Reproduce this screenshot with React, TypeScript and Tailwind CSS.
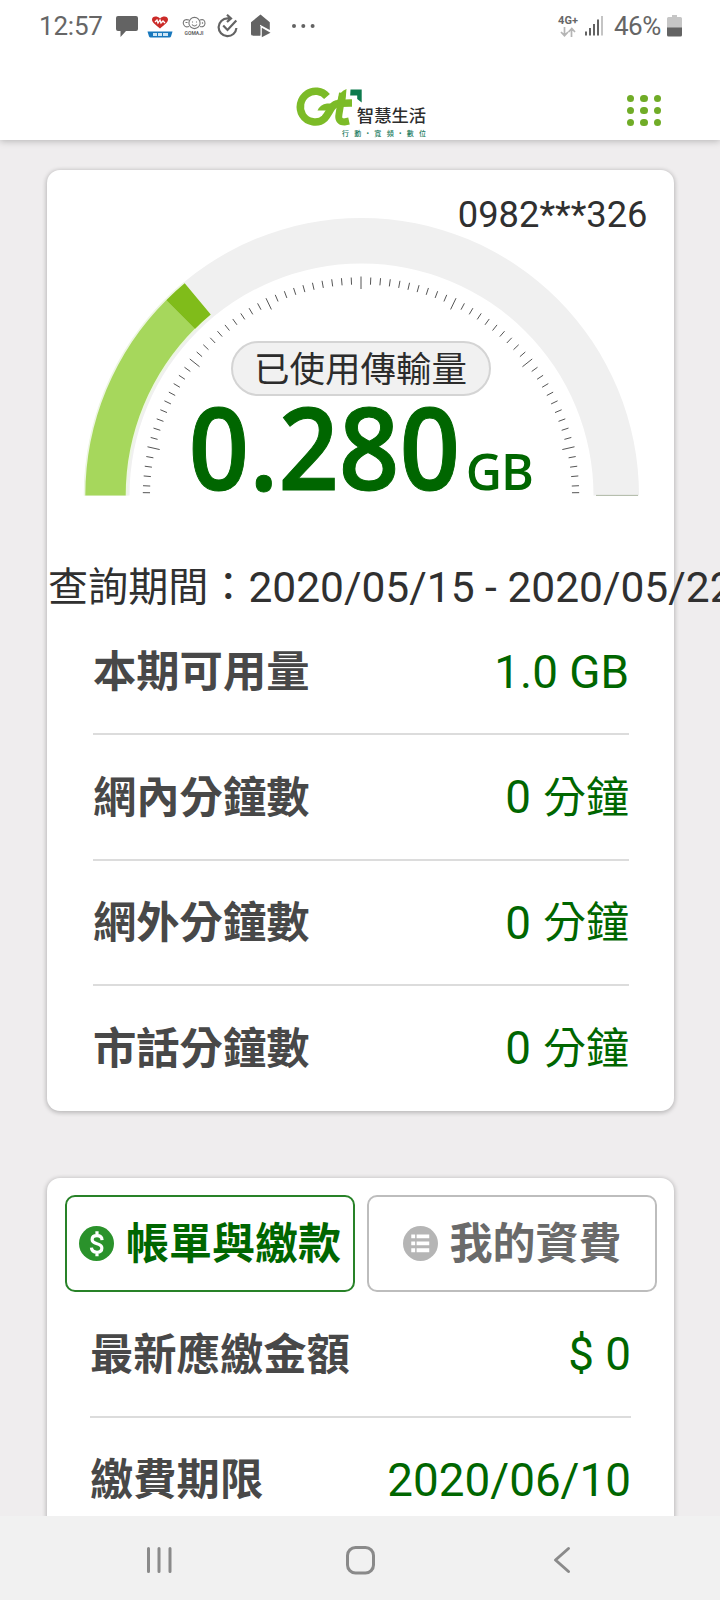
import React from "react";

const CX = 314.5;
const CY = 325.5;

function point(r: number, deg: number, cx = CX) {
  const a = (deg * Math.PI) / 180;
  return [cx - r * Math.cos(a), CY - r * Math.sin(a)];
}

function band(ro: number, ri: number, from: number, to: number) {
  const [x1, y1] = point(ro, from);
  const [x2, y2] = point(ro, to);
  const [x3, y3] = point(ri, to);
  const [x4, y4] = point(ri, from);
  return `M${x1} ${y1}A${ro} ${ro} 0 0 1 ${x2} ${y2}L${x3} ${y3}A${ri} ${ri} 0 0 0 ${x4} ${y4}Z`;
}

function Gauge() {
  const ticks = Array.from({ length: 71 }, (_, i) => {
    const long = i % 10 === 5;
    const deg = i === 0 ? 0.75 : i === 70 ? 179.25 : (i * 180) / 70;
    const [x1, y1] = point(long ? 219 : 218.2, deg, 314);
    const [x2, y2] = point(long ? 206.5 : 211, deg, 314);
    return <line key={i} x1={x1} y1={y1} x2={x2} y2={y2} />;
  });
  return (
    <svg viewBox="0 0 627 370" className="col-start-1 row-start-1 h-[370px] w-[627px]">
      <path d={band(277.5, 232, 0, 180)} fill="#f0f0f0" />
      <path d={band(277.8, 234, 0, 50.2)} fill="#edf6e2" />
      <path d={band(276.2, 235.8, 0, 45)} fill="#a6d75c" />
      <path d={band(276.2, 235.5, 45, 50.2)} fill="#80bc1a" />
      <path d="M549 325.4h42" stroke="#9aa890" strokeWidth="0.8" />
      <g stroke="#555" strokeWidth="1">{ticks}</g>
    </svg>
  );
}

function StatusBar() {
  return (
    <div className="flex h-[51px] items-center pl-[39px] pr-[38px] text-[#666]">
      <span className="w-[66px] text-[26px] leading-none tracking-[-0.2px]">12:57</span>
      <svg viewBox="0 0 24 24" className="ml-[10px] h-6 w-6" fill="#636363">
        <path d="M3 2h18q2 0 2 2v11q0 2-2 2h-10l-5.500 6v-6h-2.500q-2 0-2-2v-11q0-2 2-2z" />
      </svg>
      <svg viewBox="0 0 26 24" className="ml-[8px] h-6 w-[26px]">
        <path d="M13 14.500C8 10.500 5 8.500 5 5.600 5 2 10 1.500 13 4.500 16 1.500 21 2 21 5.600c0 2.900-3 4.900-8 8.900z" fill="#cb2a28" />
        <path d="M8 8l2-2 1 3 2-3 1 3 2-2 2 2" stroke="#fff" strokeWidth="1.300" fill="none" />
        <path d="M.5 17.500h25l-1.500 5q-.5 1-1.500 1h-19q-1 0-1.500-1z" fill="#1878bd" />
        <path d="M6 19h4v3h-4zM11 19h4v3h-4zM16 19h5v3h-5z" fill="#cfe6f5" />
      </svg>
      <div className="ml-[9px] flex w-6 flex-col items-center">
        <svg viewBox="0 0 24 14" className="h-[14px] w-6" fill="none" stroke="#777" strokeWidth="1.100">
          <circle cx="12.500" cy="7" r="5.600" />
          <path d="M7 4Q1.500 2.500 1.200 7 2 12 7 10.500M18 4q5-1.500 5 3.500-.500 4-5 3M10 8.500q2.500 3 5 0M10.500 5.500v1M14.500 5.500v1M3.500 6.500h2M20 6.500l1 1" />
        </svg>
        <span className="text-[5px] font-bold leading-[6px]">GOMAJI</span>
      </div>
      <svg viewBox="0 0 24 24" className="ml-[10px] h-6 w-6" fill="none" stroke="#636363" strokeWidth="2.200">
        <path d="M14.500 4.400H11.500A8.900 8.900 0 1 0 20.400 14M11 .8l4 3.600-4 3.600M7.200 11.500l4.300 4.500 8.800-9.500" />
      </svg>
      <svg viewBox="0 0 24 24" className="ml-[9px] h-6 w-6" fill="#636363">
        <path d="M11.500.5 20.800 8.300V16L11 10.800V21.500H4V13.500H2V8.300z" />
        <path d="M2 12h9.500v9.500H3.500q-1.500 0-1.500-1.500z" />
        <path d="M12.800 13.800l8.700 4.900-8.700 4.600z" />
      </svg>
      <svg viewBox="0 0 24 6" className="ml-[18px] h-[6px] w-6" fill="#636363">
        <circle cx="3" cy="3" r="2" /><circle cx="12.300" cy="3" r="2" /><circle cx="21.600" cy="3" r="2" />
      </svg>
      <div className="ml-auto flex w-[22px] flex-col items-center">
        <span className="text-[11px] font-bold leading-[11px]">4G+</span>
        <svg viewBox="0 0 16 10" className="mt-[1px] h-[10px] w-4" fill="none" stroke="#b5b5b5" strokeWidth="1.700">
          <path d="M4.500 0v8.500M1 5l3.500 3.700L8 5M11.500 10V1.500M8.500 5l3.300-3.500L15 5" />
        </svg>
      </div>
      <svg viewBox="0 0 20 20" className="ml-[5px] mr-[1px] h-5 w-5">
        <path d="M2 15.500V19.500M6 12V19.500M10 8V19.500M14 3.500V19.500" stroke="#636363" strokeWidth="2" />
        <path d="M18 0V19.500" stroke="#c4c4c4" strokeWidth="2" />
      </svg>
      <span className="ml-[9px] w-12 text-[26px] leading-none tracking-[-0.500px]">46%</span>
      <svg viewBox="0 0 15 22" className="ml-[5px] h-[22px] w-[15px]">
        <path d="M5 0h5v2h3.500q1.500 0 1.500 1.500V13H0V3.500Q0 2 1.500 2H5z" fill="#c6c6c6" />
        <path d="M0 12.500h15v7.500q0 1.500-1.500 1.500h-12q-1.500 0-1.500-1.500z" fill="#636363" />
      </svg>
    </div>
  );
}

function Logo() {
  return (
    <div className="grid h-[52px] w-[132px]">
      <svg viewBox="0 0 132 52" className="col-start-1 row-start-1 h-[52px] w-[132px]">
        <path
          d="M32 11.500C27 5.500 18 4.500 12 9 5 14 3.500 23 7.500 30c4.500 7.500 15.500 9.500 22 3.500 4.500-4.500 6-11.500 10.500-14 3-1.600 8-1.500 17-1.500"
          fill="none" stroke="#7cbb27" strokeWidth="7.500"
        />
        <path d="M22.500 25.500Q25 19.500 32 18.500h6l-3 7z" fill="#7cbb27" />
        <path d="M51.500 4Q44 7 42.500 15h8z" fill="#7cbb27" />
        <path d="M47.500 8 44 29q-1.500 8 5.500 8l4.500-1" fill="none" stroke="#7cbb27" strokeWidth="7" />
        <path d="M55.500 4.500h11.200v13l-4.500-3.500V10.500h-7z" fill="#0d7a4d" />
      </svg>
      <div className="col-start-1 row-start-1 flex translate-y-[2px] flex-col items-end self-end pr-[1px]">
        <span className="text-[17.300px] font-medium leading-[20px] text-[#2d2d2d]">智慧生活</span>
        <div className="mt-[4px] flex w-[84px] justify-between text-[7px] font-medium leading-[9px] text-[#1a7b60]">
          {"行動•寬頻•數位".split("").map((c, i) => (
            <span key={i}>{c}</span>
          ))}
        </div>
      </div>
    </div>
  );
}

function Row({ label, value, unit, last }: { label: string; value: string; unit?: string; last?: boolean }) {
  return (
    <div className={`flex h-[125.500px] items-center justify-between ${last ? "pt-px" : "border-b-2 border-[#dcdcdc] pt-[3px]"}`}>
      <span className="text-[43.300px] font-bold leading-none text-[#484848]">{label}</span>
      <span className="flex items-center text-[45.800px] leading-none text-[#060]">
        {value}
        {unit && <span className="ml-3 text-[43px] leading-none">{unit}</span>}
      </span>
    </div>
  );
}

const card = "w-[627px] rounded-[13px] bg-white shadow-[0_1px_4px_1px_rgba(0,0,0,0.22)]";

export default function App() {
  return (
    <div className="flex h-[1600px] w-[720px] flex-col overflow-hidden bg-[#efedee] font-[Roboto,'Noto_Sans_CJK_TC',sans-serif]">
      <header className="z-10 h-[140px] shrink-0 bg-white shadow-[0_1px_7px_rgba(0,0,0,0.25)]">
        <StatusBar />
        <div className="flex h-[89px] items-start justify-between pl-[295px] pr-[59px] pt-[34px]">
          <Logo />
          <div className="mt-[9.500px] grid grid-cols-3 gap-x-[6.300px] gap-y-[5.100px]">
            {Array.from({ length: 9 }, (_, i) => (
              <i key={i} className="h-[7.200px] w-[7.200px] rounded-full bg-[#70ac27]" />
            ))}
          </div>
        </div>
      </header>

      <main className="min-h-0 flex-1 overflow-hidden pl-[47px] pt-[30px]">
        <section className={`${card} h-[941px]`}>
          <div className="grid h-[391px] w-[627px]">
            <Gauge />
            <div className="col-start-1 row-start-1 flex flex-col items-center">
              <div className="mr-[26.500px] mt-[24px] self-end text-[36.300px] leading-[41px] text-[#303030]">0982***326</div>
              <div className="mt-[106px] flex h-[55px] w-[260px] items-center justify-center rounded-full border-2 border-[#d4d4d4] bg-[#f1f1f1] pt-[4px] text-[35.500px] leading-none text-[#2c2c2c]">
                已使用傳輸量
              </div>
              <div className="flex h-[110px] items-baseline font-['Open_Sans'] font-semibold text-[#060]">
                <span className="-mx-[9px] origin-center scale-x-[0.935] text-[113.500px] leading-[100px] [-webkit-text-stroke:1px_#060]">0.280</span>
                <span className="ml-[5px] text-[50px] leading-none tracking-[-1px]">GB</span>
              </div>
            </div>
          </div>
          <div className="flex h-[48.500px] items-center whitespace-pre pl-[1px] pt-[6px] text-[42.500px] leading-none text-[#303030]">
            <span className="text-[40.100px]">查詢期間：</span>2020/05/15 - 2020/05/22
          </div>
          <div className="pl-[46px] pr-[45px]">
            <Row label="本期可用量" value="1.0 GB" />
            <Row label="網內分鐘數" value="0" unit="分鐘" />
            <Row label="網外分鐘數" value="0" unit="分鐘" />
            <Row label="市話分鐘數" value="0" unit="分鐘" last />
          </div>
        </section>

        <section className={`${card} mt-[67px] h-[460px] pt-[17px]`}>
          <div className="flex gap-[12px] pl-[18px]">
            <button className="flex h-[97px] w-[290px] items-center justify-center rounded-[10px] border-2 border-[#288228] text-[43px] font-bold leading-none text-[#060]">
              <svg viewBox="0 0 36 36" className="mr-[12px] h-[35px] w-[35px]">
                <circle cx="18" cy="18" r="18" fill="#2a922b" />
                <path d="M23.700 14.500Q23.500 10 18.500 10q-5 0-5 4 0 3 5 4.300t5 4.400q0 4.300-5 4.300-5.500 0-5.700-4.700M18.500 5.500v4.500M18.500 26.500v4.500" fill="none" stroke="#fff" strokeWidth="3.300" />
              </svg>
              <span className="pt-[2px]">帳單與繳款</span>
            </button>
            <button className="flex h-[97px] w-[290px] items-center justify-center rounded-[10px] border-2 border-[#bdbdbd] text-[43px] font-bold leading-none text-[#6a6a6a]">
              <svg viewBox="0 0 36 36" className="mr-[12px] h-[35px] w-[35px]">
                <circle cx="18" cy="18" r="18" fill="#b5b5b5" />
                <path d="M8.500 10.700h4M14 10.700h13M8.500 17.900h4M14 17.900h13M8.500 25h4M14 25h13" stroke="#fff" strokeWidth="4" />
              </svg>
              <span className="pt-[2px]">我的資費</span>
            </button>
          </div>
          <div className="pl-[43px] pr-[43px]">
            <Row label="最新應繳金額" value="$ 0" />
            <Row label="繳費期限" value="2020/06/10" last />
          </div>
        </section>
      </main>

      <nav className="flex h-[84px] shrink-0 items-center justify-between bg-[#f1f1f1] pl-[145px] pr-[147px] pt-[3px]">
        <svg viewBox="0 0 28 28" className="h-7 w-7" stroke="#8a8a8a" strokeWidth="3" strokeLinecap="round">
          <path d="M3.500 2.500v23M14 2.500v23M25 2.500v23" />
        </svg>
        <svg viewBox="0 0 30 30" className="mr-[4px] h-[30px] w-[30px]" fill="none" stroke="#8a8a8a" strokeWidth="3">
          <rect x="2.500" y="2.500" width="26" height="25.500" rx="8" />
        </svg>
        <svg viewBox="0 0 22 28" className="h-7 w-[22px]" fill="none" stroke="#8a8a8a" strokeWidth="3" strokeLinecap="round" strokeLinejoin="round">
          <path d="M17.500 2.500 4.500 14l13 11.500" />
        </svg>
      </nav>
    </div>
  );
}
